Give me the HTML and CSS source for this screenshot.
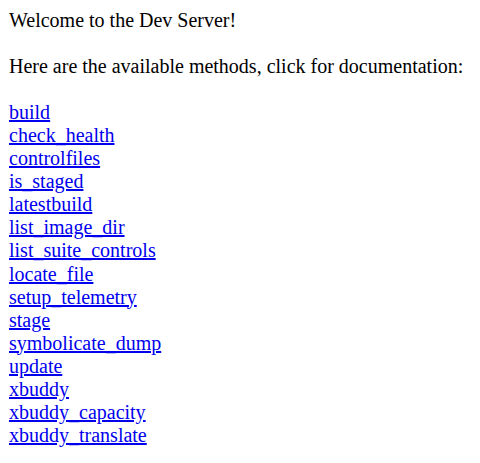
FILE: index.html
```html
<!DOCTYPE html>
<html>
<head>
<meta charset="utf-8">
<link rel="stylesheet" href="styles.css">
</head>
<body class="page">Welcome to the Dev Server!<br><br>Here are the available methods, click for documentation:<br><br><a class="method" href="#">build</a><br><a class="method" href="#">check_health</a><br><a class="method" href="#">controlfiles</a><br><a class="method" href="#">is_staged</a><br><a class="method" href="#">latestbuild</a><br><a class="method" href="#">list_image_dir</a><br><a class="method" href="#">list_suite_controls</a><br><a class="method" href="#">locate_file</a><br><a class="method" href="#">setup_telemetry</a><br><a class="method" href="#">stage</a><br><a class="method" href="#">symbolicate_dump</a><br><a class="method" href="#">update</a><br><a class="method" href="#">xbuddy</a><br><a class="method" href="#">xbuddy_capacity</a><br><a class="method" href="#">xbuddy_translate</a><br></body>
</html>
```
FILE: styles.css
```css
.page {
  margin: 0;
  padding: 9px 8px 8px 9px;
  font-family: "Liberation Serif", "Times New Roman", serif;
  font-size: 20px;
  line-height: 23.05px;
  color: #000;
  background: #fff;
}
.method {
  color: #0000ee;
  text-decoration: underline;
}
```
